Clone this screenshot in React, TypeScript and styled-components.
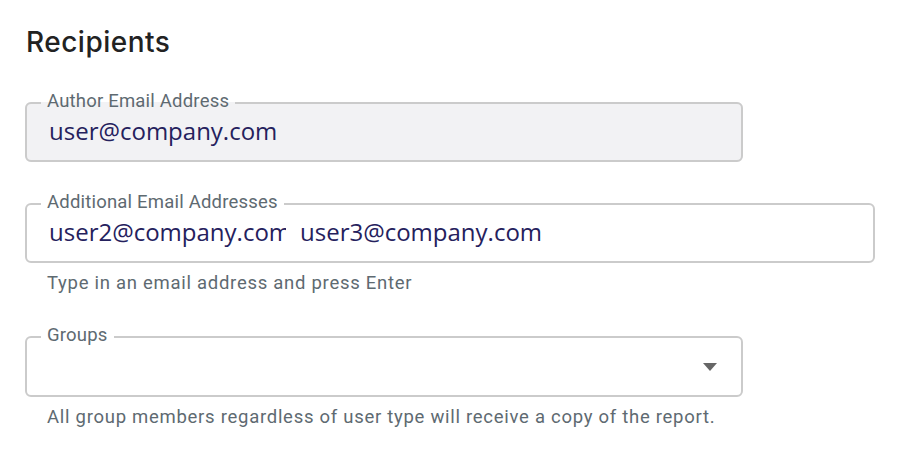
import React from 'react';
import styled, { createGlobalStyle } from 'styled-components';

const GlobalStyle = createGlobalStyle`
  html, body {
    margin: 0;
    padding: 0;
    background: #ffffff;
  }
  body {
    font-family: Roboto, 'Liberation Sans', sans-serif;
  }
`;

const Page = styled.div`
  width: 900px;
  height: 462px;
  box-sizing: border-box;
  padding: 25px 0 0 25px;
  display: flex;
  flex-direction: column;
  background: #fff;
`;

const Heading = styled.h2`
  margin: 0 0 0 1px;
  font-family: Inter, Roboto, sans-serif;
  font-size: 28px;
  font-weight: 500;
  line-height: 34px;
  letter-spacing: 0.5px;
  color: #222222;
`;

const Group = styled.div<{ $gap: number }>`
  margin-top: ${(p) => p.$gap}px;
  display: flex;
  flex-direction: column;
`;

const Field = styled.fieldset<{ $width: number; $height: number; $disabled?: boolean }>`
  margin: 0;
  padding: 0;
  width: ${(p) => p.$width}px;
  height: ${(p) => p.$height}px;
  box-sizing: border-box;
  border: 2px solid #cbcbcb;
  border-radius: 6px;
  background: ${(p) => (p.$disabled ? '#f2f2f4' : '#ffffff')};
`;

const Label = styled.legend`
  margin-left: 14px;
  padding: 0 6px 3px 6px;
  font-family: Roboto, 'Liberation Sans', sans-serif;
  font-size: 18.5px;
  line-height: 16px;
  color: #5e6a71;
  letter-spacing: 0.2px;
`;

const Content = styled.div`
  display: flex;
  align-items: center;
  height: 30px;
  padding: 4px 24px 0 22px;
`;

const Value = styled.span`
  font-family: 'Open Sans', sans-serif;
  font-size: 24px;
  line-height: 30px;
  color: #25215d;
  white-space: nowrap;
`;

const Chips = styled.div`
  display: flex;
  gap: 14px;
`;

// earlier chips get squeezed when the row fills up
const Chip = styled(Value)`
  display: block;
  &:not(:last-child) {
    max-width: 237px;
    overflow: hidden;
  }
`;

const Caret = styled.svg`
  margin-left: auto;
  margin-top: 3px;
  flex-shrink: 0;
`;

const Helper = styled.p<{ $gap: number }>`
  margin: ${(p) => p.$gap}px 0 0 22px;
  font-family: Roboto, 'Liberation Sans', sans-serif;
  font-size: 18.5px;
  line-height: 22px;
  color: #5e6a71;
  letter-spacing: 0.72px;
`;

export default function App() {
  return (
    <>
      <GlobalStyle />
      <Page>
        <Heading>Recipients</Heading>
        <Group $gap={34}>
          <Field $width={718} $height={69} $disabled>
            <Label>Author Email Address</Label>
            <Content>
              <Value>user@company.com</Value>
            </Content>
          </Field>
        </Group>
        <Group $gap={32}>
          <Field $width={850} $height={69}>
            <Label>Additional Email Addresses</Label>
            <Content>
              <Chips>
                <Chip>user2@company.com</Chip>
                <Chip>user3@company.com</Chip>
              </Chips>
            </Content>
          </Field>
          <Helper $gap={9}>Type in an email address and press Enter</Helper>
        </Group>
        <Group $gap={33}>
          <Field $width={718} $height={70}>
            <Label>Groups</Label>
            <Content>
              <Caret width="14" height="8" viewBox="0 0 14 8">
                <path d="M0 0h14L7 8z" fill="#666666" />
              </Caret>
            </Content>
          </Field>
          <Helper $gap={9}>All group members regardless of user type will receive a copy of the report.</Helper>
        </Group>
      </Page>
    </>
  );
}
